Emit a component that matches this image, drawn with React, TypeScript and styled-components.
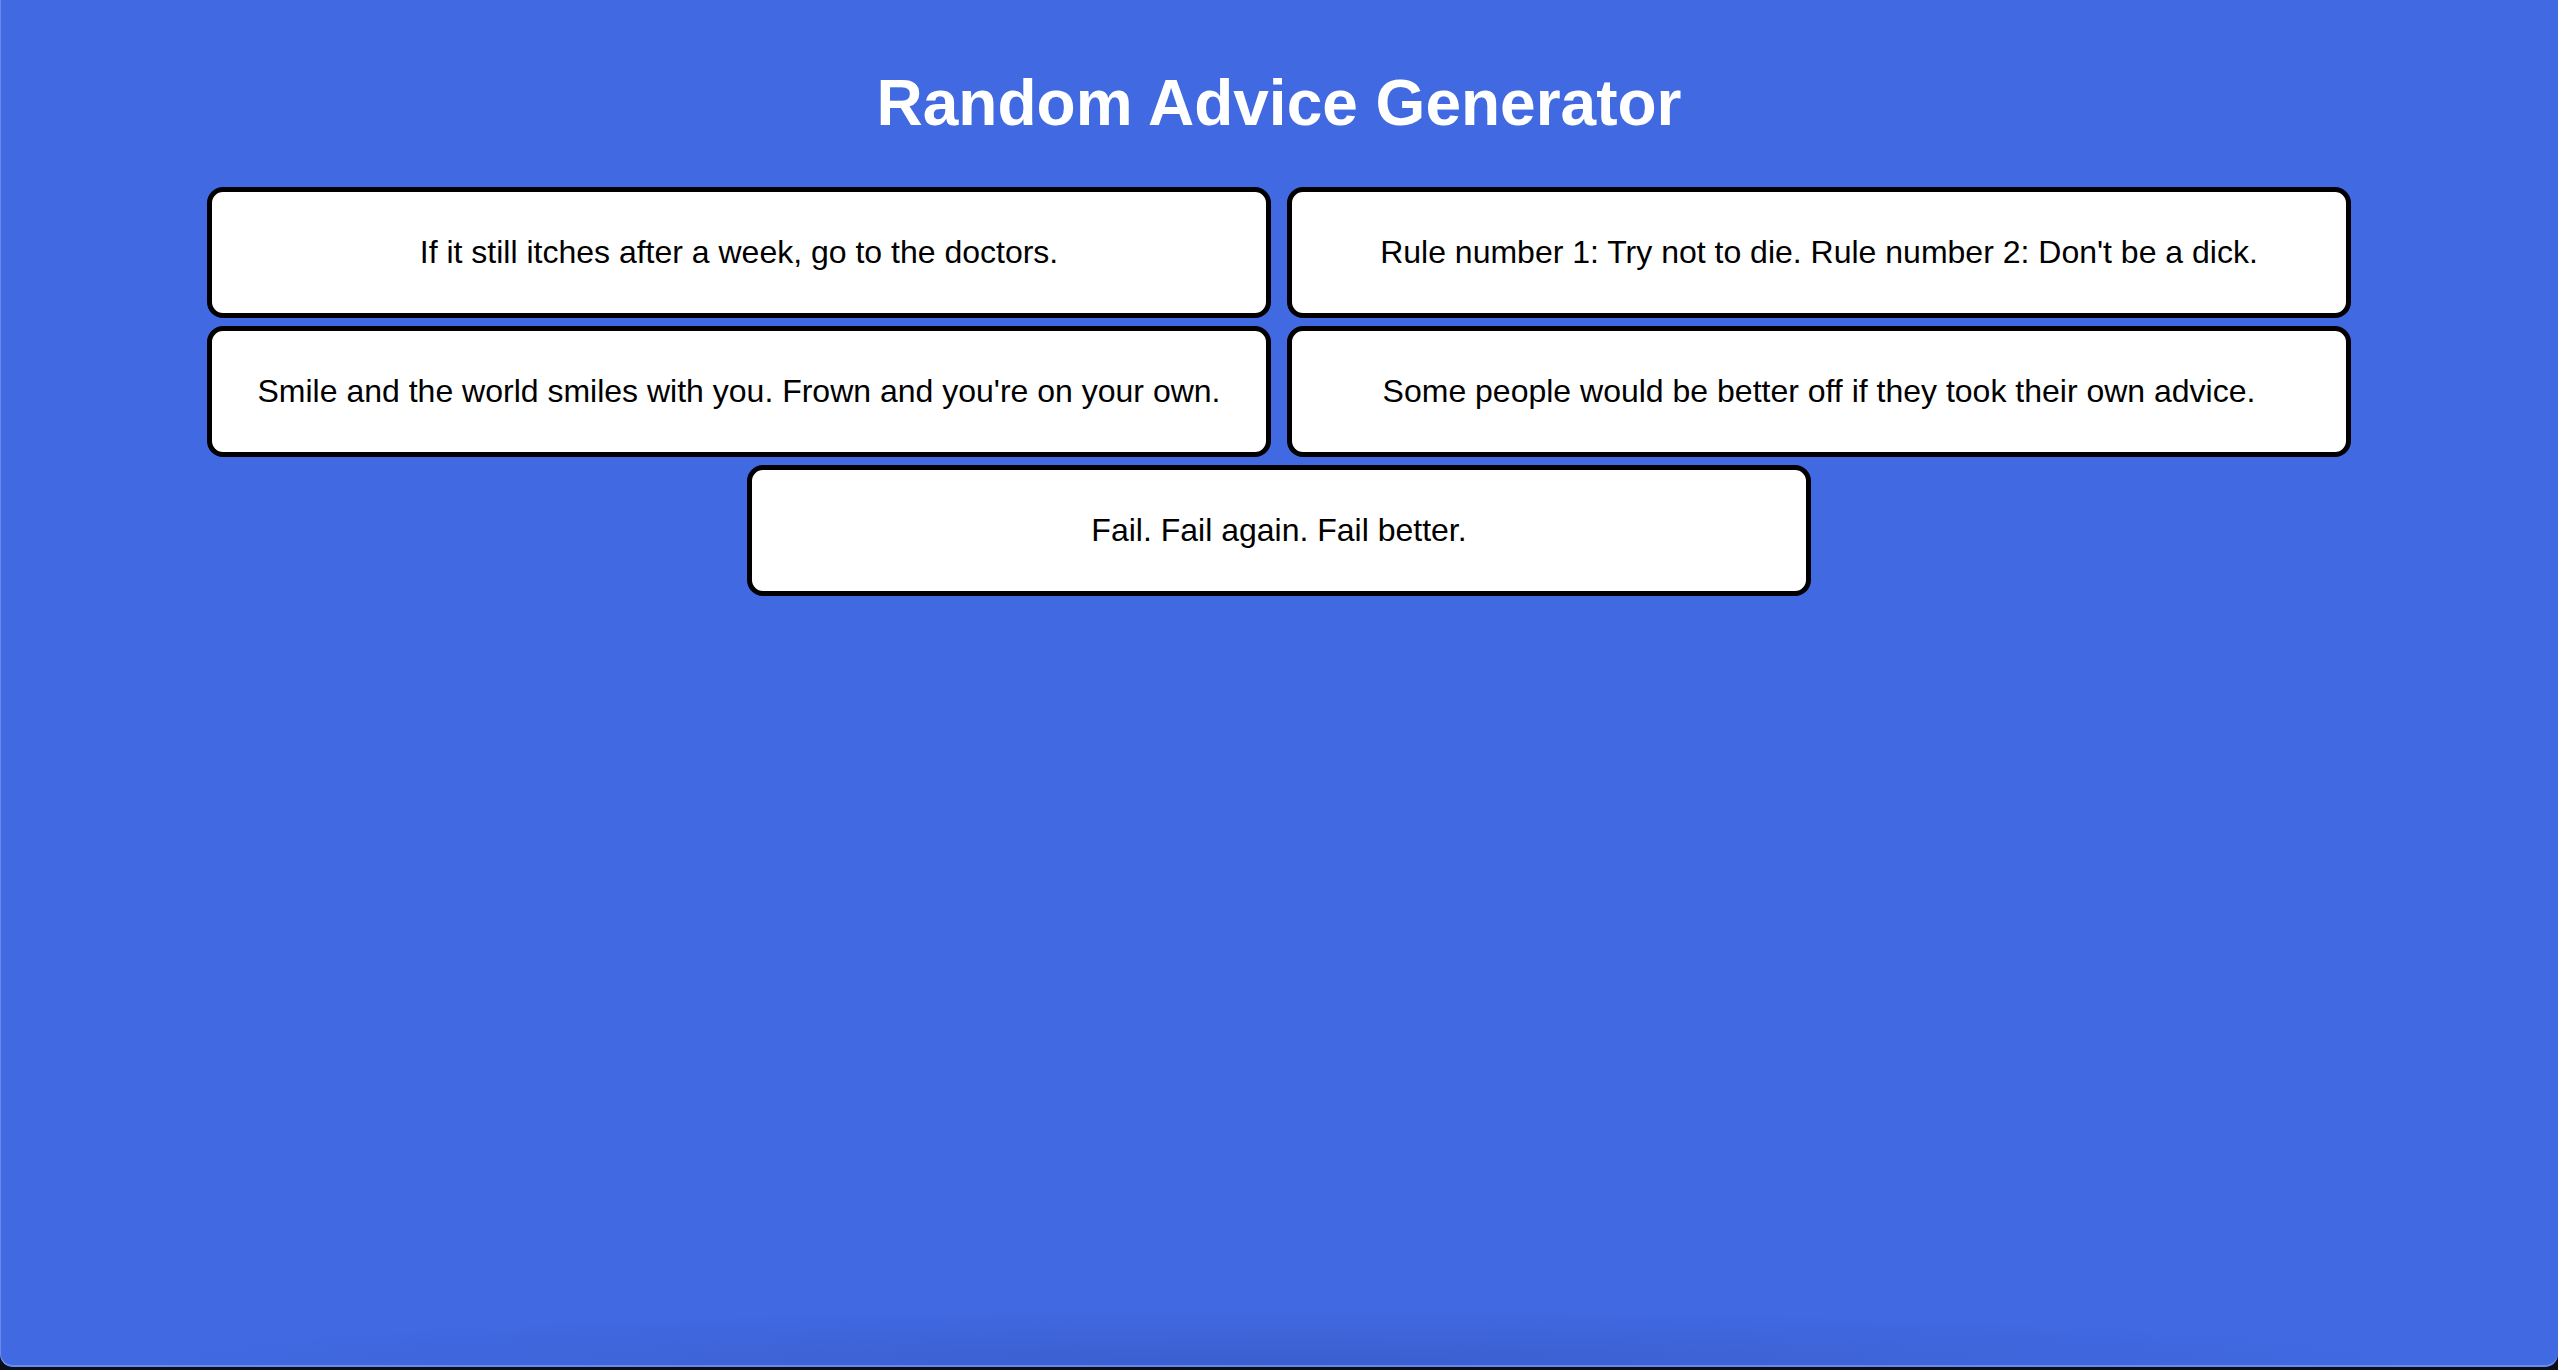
import React from "react";
import styled, { createGlobalStyle } from "styled-components";

const GlobalStyle = createGlobalStyle`
  html, body {
    margin: 0;
    padding: 0;
    background: #0b0f1a;
    overflow: hidden;
  }
  #root {
    min-height: 100vh;
  }
`;

const Window = styled.div`
  position: relative;
  box-sizing: border-box;
  height: 1367px;
  background-color: royalblue;
  background-image: radial-gradient(
    ellipse 45% 60px at 50% 100%,
    rgba(20, 30, 90, 0.14),
    rgba(20, 30, 90, 0) 100%
  );
  border-radius: 0 0 13px 13px;
  box-shadow: inset 1px 0 0 rgba(255, 255, 255, 0.22),
    inset 0 -2px 0 rgba(140, 170, 255, 0.55);
  padding-top: 23px;
  font-family: "Liberation Sans", Arial, Helvetica, sans-serif;
`;

const Title = styled.h1`
  margin: 0.67em 0;
  text-align: center;
  color: #ffffff;
  font-size: 64px;
  font-weight: 700;
  line-height: normal;
`;

const Grid = styled.div`
  width: 2160px;
  margin: 0 auto;
  display: flex;
  flex-wrap: wrap;
  justify-content: center;
`;

const Card = styled.div`
  box-sizing: border-box;
  width: 1064px;
  margin: 4px 8px;
  padding: 42px 20px;
  background: #ffffff;
  border: 5px solid #000000;
  border-radius: 16px;
  text-align: center;
  color: #000000;
  font-size: 32px;
  line-height: normal;
`;

const advice = [
  "If it still itches after a week, go to the doctors.",
  "Rule number 1: Try not to die. Rule number 2: Don't be a dick.",
  "Smile and the world smiles with you. Frown and you're on your own.",
  "Some people would be better off if they took their own advice.",
  "Fail. Fail again. Fail better.",
];

export default function App() {
  return (
    <>
      <GlobalStyle />
      <Window>
        <Title>Random Advice Generator</Title>
        <Grid>
          {advice.map((a) => (
            <Card key={a}>{a}</Card>
          ))}
        </Grid>
      </Window>
    </>
  );
}
